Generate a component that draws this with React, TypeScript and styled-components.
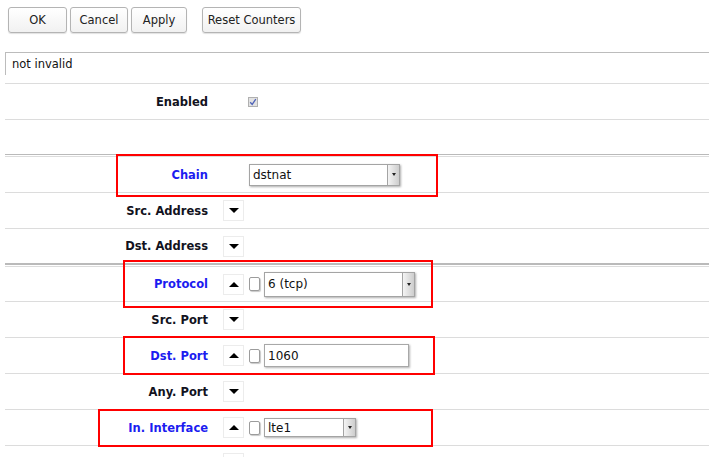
import React from 'react';
import styled, { createGlobalStyle } from 'styled-components';

const GlobalStyle = createGlobalStyle`
  html, body {
    margin: 0;
    padding: 0;
    background: #fff;
  }
  body {
    font-family: 'DejaVu Sans', Verdana, sans-serif;
    font-size: 11px;
    color: #161626;
  }
  * {
    box-sizing: border-box;
  }
`;

const Page = styled.div`
  width: 709px;
  height: 457px;
  overflow: hidden;
`;

const Toolbar = styled.div`
  display: flex;
  gap: 3px;
  padding: 7px 0 0 8px;
`;

const Button = styled.div<{ w: number; space?: number }>`
  width: ${(p) => p.w}px;
  height: 26px;
  margin-left: ${(p) => p.space || 0}px;
  display: flex;
  align-items: center;
  justify-content: center;
  border: 1px solid #b4b4b4;
  border-radius: 3px;
  background: linear-gradient(#ffffff, #f1f1f1);
  box-shadow: 0 1px 1px rgba(0, 0, 0, 0.12);
  font-size: 11.5px;
  color: #222;
`;

const Form = styled.div`
  margin-left: 5px;
`;

const CommentWrap = styled.div`
  padding: 19px 0 8px 0;
  border-bottom: 1px solid #dcdcdc;
`;

const CommentBox = styled.div`
  height: 23px;
  border-top: 1px solid #bcbcbc;
  border-left: 1px solid #bcbcbc;
  padding: 4px 0 0 6px;
  font-size: 11.5px;
  color: #111;
`;

const Row = styled.div<{ h: number; noLine?: boolean }>`
  position: relative;
  display: flex;
  align-items: center;
  height: ${(p) => p.h + (p.noLine ? 0 : 1)}px;
  border-bottom: ${(p) => (p.noLine ? 'none' : '1px solid #dcdcdc')};
`;

const Divider = styled.div<{ thick?: boolean }>`
  height: ${(p) => (p.thick ? 4 : 3)}px;
  border-top: ${(p) => (p.thick ? 2 : 1)}px solid #bababa;
  border-bottom: 1px solid #dcdcdc;
`;

const Label = styled.div<{ hl?: boolean }>`
  width: 203px;
  text-align: right;
  font-weight: bold;
  font-size: 11.5px;
  color: ${(p) => (p.hl ? '#1c1cf0' : '#121220')};
  white-space: nowrap;
`;

const ToggleSlot = styled.div`
  width: 21px;
  height: 21px;
  margin: 0 5px 0 15px;
  display: flex;
  align-items: center;
  justify-content: center;
`;

const Toggle = styled(ToggleSlot)<{ up?: boolean }>`
  border: 1px solid #ececec;
  background: #fff;
  &::after {
    content: '';
    width: 0;
    height: 0;
    border-left: 5px solid transparent;
    border-right: 5px solid transparent;
    ${(p) => (p.up ? 'border-bottom: 5px solid #000;' : 'border-top: 5px solid #000;')}
  }
`;

const Value = styled.div`
  display: flex;
  align-items: center;
  gap: 4px;
`;

const CheckBox = styled.div`
  width: 11px;
  height: 14px;
  border: 1px solid #9c9c9c;
  border-radius: 2px;
  background: #fff;
  box-shadow: 1px 1px 1px rgba(0, 0, 0, 0.22);
`;

const Checked = styled.div`
  width: 10px;
  height: 10px;
  margin-left: -1px;
  border: 1px solid #b0b0b0;
  background: #e2e2e2;
  display: flex;
  align-items: center;
  justify-content: center;
`;

const SelectBox = styled.div<{ w: number; h: number }>`
  width: ${(p) => p.w}px;
  height: ${(p) => p.h}px;
  display: flex;
  align-items: center;
  border: 1px solid #a4a4a4;
  background: #fff;
  box-shadow: 1px 1px 2px rgba(0, 0, 0, 0.32);
  font-size: 12px;
  color: #111;
  padding-left: 3px;
`;

const SelectText = styled.span`
  flex: 1;
  white-space: nowrap;
`;

const SelectArrow = styled.div`
  width: 12px;
  height: 100%;
  border-left: 1px solid #a4a4a4;
  background: linear-gradient(to right, #f4f4f4, #cdcdcd);
  display: flex;
  align-items: center;
  justify-content: center;
  &::after {
    content: '';
    width: 0;
    height: 0;
    border-left: 2.5px solid transparent;
    border-right: 2.5px solid transparent;
    border-top: 3px solid #222;
  }
`;

const TextInput = styled.div<{ w: number; h: number }>`
  width: ${(p) => p.w}px;
  height: ${(p) => p.h}px;
  display: flex;
  align-items: center;
  border: 1px solid #a8a8a8;
  background: #fff;
  box-shadow: 1px 1px 2px rgba(0, 0, 0, 0.3);
  font-size: 12px;
  color: #111;
  padding-left: 3px;
`;

const Highlight = styled.div<{ x: number; y: number; w: number; h: number }>`
  position: absolute;
  left: ${(p) => p.x}px;
  top: ${(p) => p.y}px;
  width: ${(p) => p.w}px;
  height: ${(p) => p.h}px;
  border: 2px solid #ff0000;
  z-index: 2;
  pointer-events: none;
`;

function Select({ value, w, h }: { value: string; w: number; h: number }) {
  return (
    <SelectBox w={w} h={h}>
      <SelectText>{value}</SelectText>
      <SelectArrow />
    </SelectBox>
  );
}

export default function App() {
  return (
    <Page>
      <GlobalStyle />
      <Toolbar>
        <Button w={59}>OK</Button>
        <Button w={58}>Cancel</Button>
        <Button w={56}>Apply</Button>
        <Button w={99} space={12}>
          Reset Counters
        </Button>
      </Toolbar>
      <Form>
        <CommentWrap>
          <CommentBox>not invalid</CommentBox>
        </CommentWrap>

        <Row h={35}>
          <Label>Enabled</Label>
          <ToggleSlot />
          <Checked>
            <svg width="8" height="8" viewBox="0 0 8 8">
              <polyline points="1.2,4.2 3.2,6.4 6.8,1.2" fill="none" stroke="#4f63b8" strokeWidth="1.3" />
            </svg>
          </Checked>
        </Row>
        <Row h={34} noLine />
        <Divider />

        <Row h={35}>
          <Highlight x={111} y={-3} w={322} h={43} />
          <Label hl>Chain</Label>
          <ToggleSlot />
          <Select value="dstnat" w={151} h={22} />
        </Row>
        <Row h={35}>
          <Label>Src. Address</Label>
          <Toggle />
        </Row>
        <Row h={34} noLine>
          <Label>Dst. Address</Label>
          <Toggle />
        </Row>
        <Divider thick />

        <Row h={34}>
          <Highlight x={118} y={-7} w={310} h={48} />
          <Label hl>Protocol</Label>
          <Toggle up />
          <Value>
            <CheckBox />
            <Select value="6 (tcp)" w={151} h={25} />
          </Value>
        </Row>
        <Row h={35}>
          <Label>Src. Port</Label>
          <Toggle />
        </Row>
        <Row h={35}>
          <Highlight x={118} y={-2} w={312} h={39} />
          <Label hl>Dst. Port</Label>
          <Toggle up />
          <Value>
            <CheckBox />
            <TextInput w={145} h={23}>1060</TextInput>
          </Value>
        </Row>
        <Row h={35}>
          <Label>Any. Port</Label>
          <Toggle />
        </Row>
        <Row h={35}>
          <Highlight x={93} y={-1} w={335} h={38} />
          <Label hl>In. Interface</Label>
          <Toggle up />
          <Value>
            <CheckBox />
            <Select value="lte1" w={92} h={19} />
          </Value>
        </Row>
        <Row h={35}>
          <Label />
          <Toggle />
        </Row>
      </Form>
    </Page>
  );
}
